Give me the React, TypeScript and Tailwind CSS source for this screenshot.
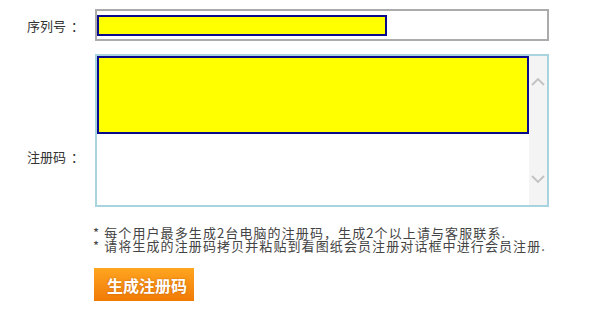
import React from 'react';

const font = { fontFamily: '"Noto Sans CJK SC", "Liberation Sans", sans-serif' };

const App = () => {
  return (
    <div className="w-[600px] h-[318px] bg-white relative text-[#333]" style={font}>
      <div className="pt-[9px] pl-[27px] flex items-center">
        <div className="w-[68px] text-[13px] leading-none">
          序列号<span className="ml-[5px]">：</span>
        </div>
        <div className="w-[454px] h-[32px] border-2 border-[#ababab] bg-white flex items-center">
          <div className="w-[290px] h-[21px] bg-[#ffff00] border-2 border-[#0a0a8c]" />
        </div>
      </div>

      <div className="mt-[13px] pl-[27px] flex items-center">
        <div className="w-[68px] text-[13px] leading-none pt-[52px]">
          注册码<span className="ml-[5px]">：</span>
        </div>
        <div className="w-[454px] h-[153px] border-2 border-[#a9d3df] bg-white flex">
          <div className="flex-1 flex flex-col">
            <div className="h-[78px] bg-[#ffff00] border-2 border-[#0a0a8c]" />
          </div>
          <div className="w-[18px] bg-[#f4f4f4] flex flex-col items-center justify-between py-[21px]">
            <svg width="14" height="9" viewBox="0 0 14 9">
              <path d="M1 8 L7 2 L13 8" fill="none" stroke="#c2c2c2" strokeWidth="1.8" />
            </svg>
            <svg width="14" height="9" viewBox="0 0 14 9">
              <path d="M1 1 L7 7 L13 1" fill="none" stroke="#c2c2c2" strokeWidth="1.8" />
            </svg>
          </div>
        </div>
      </div>

      <div className="pl-[93px] mt-[19px] text-[13px] leading-[13px] tracking-[1.1px] text-[#444]">
        <div>* 每个用户最多生成2台电脑的注册码，生成2个以上请与客服联系.</div>
        <div>* 请将生成的注册码拷贝并粘贴到看图纸会员注册对话框中进行会员注册.</div>
      </div>

      <div className="pl-[94px] mt-[16px]">
        <button
          className="w-[100px] h-[33px] pl-[13px] text-left bg-gradient-to-b from-[#ffa51f] to-[#f07a05] text-white text-[16px] font-bold leading-none [text-shadow:0_0_2px_rgba(160,70,0,0.6)]"
          style={font}
        >
          生成注册码
        </button>
      </div>
    </div>
  );
};

export default App;
